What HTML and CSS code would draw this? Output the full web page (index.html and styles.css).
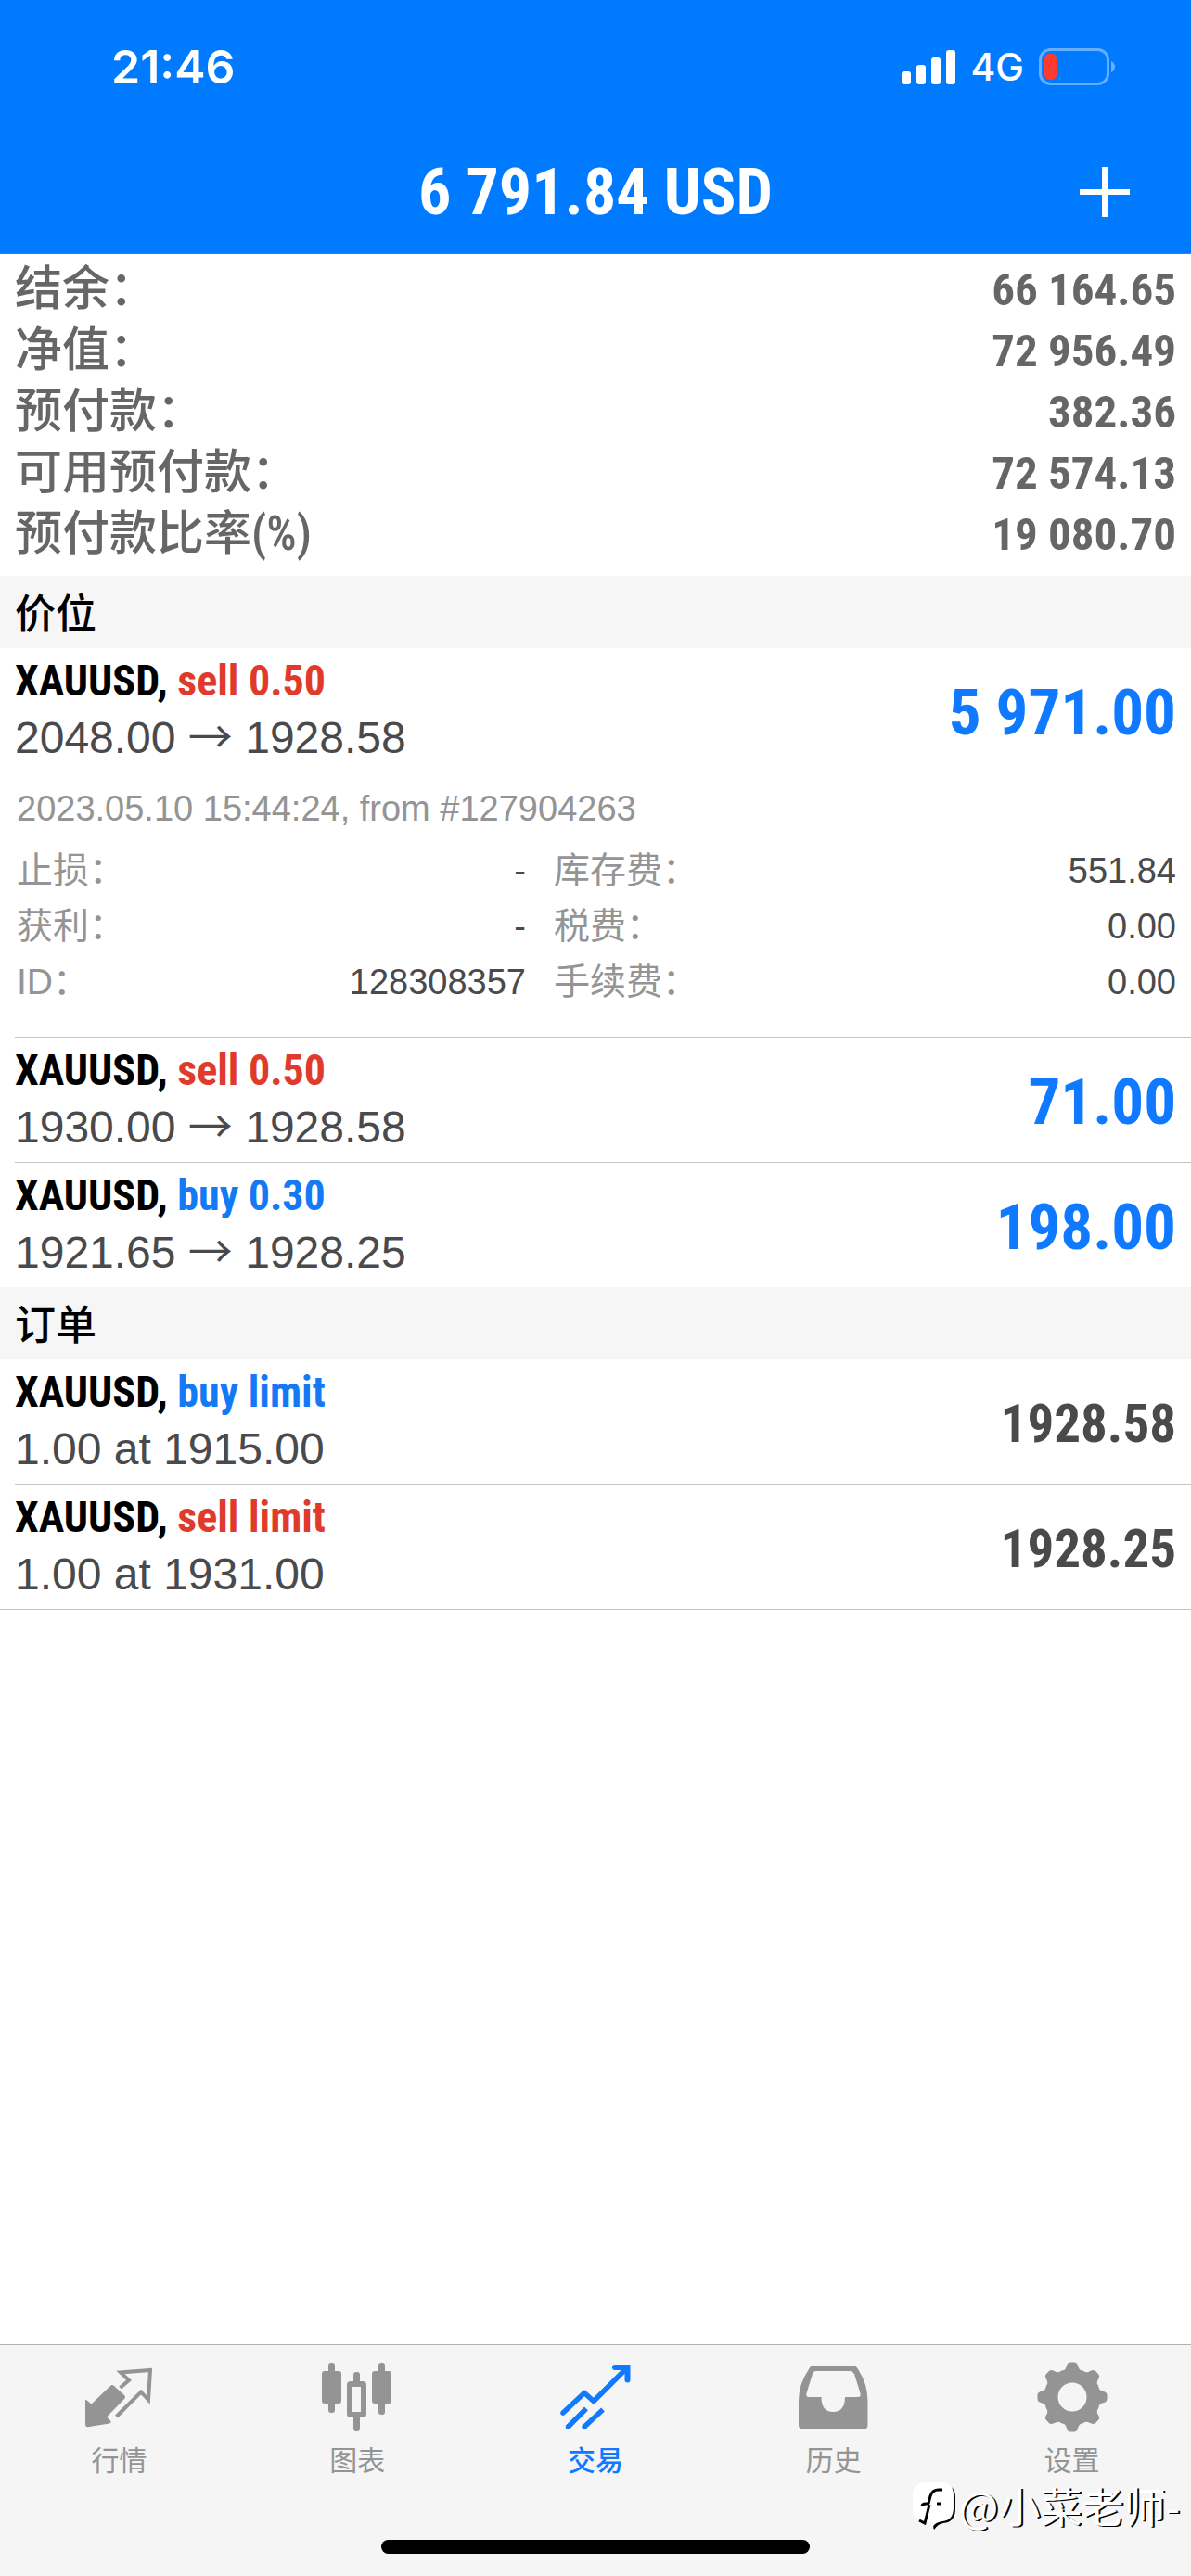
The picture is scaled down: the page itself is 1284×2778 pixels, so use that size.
FILE: index.html
```html
<!DOCTYPE html>
<html lang="zh-CN">
<head>
	<meta charset="UTF-8" />
	<meta name="viewport" content="width=device-width, initial-scale=1.0" />
	<title>交易</title>
	<link rel="stylesheet" href="styles.css">
</head>
<body>

	<header class="header">
		<div class="status">
			<span class="status__time">21:46</span>
			<div class="status__icons">
				<svg class="status__signal" viewBox="0 0 58 38" aria-hidden="true">
					<rect x="0" y="24" width="10" height="14" rx="3" />
					<rect x="16" y="17" width="10" height="21" rx="3" />
					<rect x="32" y="9" width="10" height="29" rx="3" />
					<rect x="48" y="1" width="10" height="37" rx="3" />
				</svg>
				<span class="status__network">4G</span>
				<svg class="status__battery" viewBox="0 0 83 40" aria-hidden="true">
					<rect x="1.5" y="1.5" width="73" height="37" rx="11" fill="none" stroke="#66afff" stroke-width="3" />
					<path d="M78 14 Q82 16 82 20 T78 26 Z" fill="#66afff" />
					<rect x="6" y="6" width="13" height="28" rx="5" fill="#ff3b30" />
				</svg>
			</div>
		</div>
		<div class="header__bar">
			<h1 class="header__title">6 791.84 USD</h1>
			<button class="header__add" type="button" aria-label="新订单">
				<svg viewBox="0 0 54 54" aria-hidden="true"><path d="M27 0 V54 M0 27 H54" stroke="currentColor" stroke-width="6" /></svg>
			</button>
		</div>
	</header>

	<main class="content">
		<dl class="summary">
			<div class="summary__row"><dt>结余：</dt><dd>66 164.65</dd></div>
			<div class="summary__row"><dt>净值：</dt><dd>72 956.49</dd></div>
			<div class="summary__row"><dt>预付款：</dt><dd>382.36</dd></div>
			<div class="summary__row"><dt>可用预付款：</dt><dd>72 574.13</dd></div>
			<div class="summary__row"><dt>预付款比率(%)</dt><dd>19 080.70</dd></div>
		</dl>

		<h2 class="section-title">价位</h2>
		<ul class="list">
			<li class="list__item">
				<div class="trade">
					<div class="trade__info">
						<div class="trade__symbol">XAUUSD, <span class="sell">sell 0.50</span></div>
						<div class="trade__price">2048.00 <span class="trade__arrow">→</span> 1928.58</div>
					</div>
					<div class="trade__profit">5 971.00</div>
				</div>
				<div class="details">
					<div class="details__date">2023.05.10 15:44:24, from #127904263</div>
					<dl class="details__grid">
						<div class="details__row"><dt>止损：</dt><dd>-</dd></div>
						<div class="details__row"><dt>库存费：</dt><dd>551.84</dd></div>
						<div class="details__row"><dt>获利：</dt><dd>-</dd></div>
						<div class="details__row"><dt>税费：</dt><dd>0.00</dd></div>
						<div class="details__row"><dt>ID：</dt><dd>128308357</dd></div>
						<div class="details__row"><dt>手续费：</dt><dd>0.00</dd></div>
					</dl>
				</div>
			</li>
			<li class="list__item">
				<div class="trade">
					<div class="trade__info">
						<div class="trade__symbol">XAUUSD, <span class="sell">sell 0.50</span></div>
						<div class="trade__price">1930.00 <span class="trade__arrow">→</span> 1928.58</div>
					</div>
					<div class="trade__profit">71.00</div>
				</div>
			</li>
			<li class="list__item">
				<div class="trade">
					<div class="trade__info">
						<div class="trade__symbol">XAUUSD, <span class="buy">buy 0.30</span></div>
						<div class="trade__price">1921.65 <span class="trade__arrow">→</span> 1928.25</div>
					</div>
					<div class="trade__profit">198.00</div>
				</div>
			</li>
		</ul>

		<h2 class="section-title">订单</h2>
		<ul class="list list--last">
			<li class="list__item">
				<div class="trade">
					<div class="trade__info">
						<div class="trade__symbol">XAUUSD, <span class="buy">buy limit</span></div>
						<div class="trade__price">1.00 at 1915.00</div>
					</div>
					<div class="trade__current">1928.58</div>
				</div>
			</li>
			<li class="list__item">
				<div class="trade">
					<div class="trade__info">
						<div class="trade__symbol">XAUUSD, <span class="sell">sell limit</span></div>
						<div class="trade__price">1.00 at 1931.00</div>
					</div>
					<div class="trade__current">1928.25</div>
				</div>
			</li>
		</ul>
	</main>

	<footer class="footer">
		<nav class="tabs">
			<a class="tabs__item" href="#quotes">
				<svg class="tabs__icon" viewBox="0 0 76 76" aria-hidden="true">
					<path d="M3 41 L8.500 45.500 L29 26 Q31 24 33 26 L44 36 Q46 38 44 40 L25 59.500 L29.500 64 Q30 66 28 66.500 L6 70 Q2 71 2 67 V42 Q2 40.500 3 41 Z" fill="currentColor" />
					<path d="M39.500 28 L49 20 L40 11.500 L72 9 L70 41 L62 32.500 L35.500 59" fill="none" stroke="currentColor" stroke-width="4" />
				</svg>
				<span>行情</span>
			</a>
			<a class="tabs__item" href="#charts">
				<svg class="tabs__icon" viewBox="0 0 76 76" aria-hidden="true">
					<g fill="currentColor">
						<rect x="0" y="10" width="21" height="35" rx="3" />
						<rect x="7" y="1" width="7" height="54" rx="3" />
						<rect x="54" y="10" width="21" height="35" rx="3" />
						<rect x="61" y="1" width="7" height="56" rx="3" />
						<rect x="34" y="11" width="7" height="14" rx="3" />
						<rect x="34" y="57" width="7" height="18" rx="3" />
					</g>
					<rect x="30" y="24" width="15" height="33" rx="1" fill="none" stroke="currentColor" stroke-width="6" />
				</svg>
				<span>图表</span>
			</a>
			<a class="tabs__item tabs__item--active" href="#trade">
				<svg class="tabs__icon" viewBox="0 0 76 76" aria-hidden="true">
					<g fill="none" stroke="currentColor" stroke-width="5.500">
						<path d="M3 55 L26 33.500 L36 42.500 L71 7.500" stroke-linejoin="round" stroke-linecap="round" />
						<path d="M59 6 H72.500 V19.500" stroke-width="6" stroke-linecap="round" />
						<path d="M28 50.500 L8.500 70 M46 51.500 L26 70" />
						<path d="M8.500 70 V70 M26 70 V70" stroke-linecap="round" />
					</g>
				</svg>
				<span>交易</span>
			</a>
			<a class="tabs__item" href="#history">
				<svg class="tabs__icon" viewBox="0 0 76 76" aria-hidden="true">
					<path fill="currentColor" fill-rule="evenodd" d="M16 4 H58 Q62 4 64 8 Q74.500 24 74.500 42 V68 Q74.500 73 69.500 73 H5 Q0 73 0 68 V42 Q0 24 11 8 Q13 4 16 4 Z M19 10 Q16 10 15 13 L8.500 34 Q7.500 38 11 38 H24.500 Q24.500 54 37 54 Q50 54 50 38 H64 Q67.500 38 66.500 34 L60 13 Q58 10 55 10 Z" />
				</svg>
				<span>历史</span>
			</a>
			<a class="tabs__item" href="#settings">
				<svg class="tabs__icon" viewBox="0 0 76 76" aria-hidden="true">
					<defs>
						<path id="tooth" d="M26 12 Q31 9 32 4 Q33 .5 36 .5 H40 Q43 .5 44 4 Q45 9 50 12 Z" />
					</defs>
					<circle cx="38" cy="38" r="23" fill="none" stroke="currentColor" stroke-width="15" />
					<g fill="currentColor">
						<use href="#tooth" />
						<use href="#tooth" transform="rotate(45 38 38)" />
						<use href="#tooth" transform="rotate(90 38 38)" />
						<use href="#tooth" transform="rotate(135 38 38)" />
						<use href="#tooth" transform="rotate(180 38 38)" />
						<use href="#tooth" transform="rotate(225 38 38)" />
						<use href="#tooth" transform="rotate(270 38 38)" />
						<use href="#tooth" transform="rotate(315 38 38)" />
					</g>
				</svg>
				<span>设置</span>
			</a>
		</nav>
		<div class="home-indicator"></div>
		<div class="watermark">
			<svg class="watermark__logo" viewBox="0 0 46 52" aria-hidden="true">
				<path d="M33 3 Q46 4 46 17 V29 Q46 44 33 45 Q27 46 23 52 Q21 48 24 43 L36 30 Z" fill="#000" />
				<path d="M14 1 H31 Q44 1 44 15 V28 Q44 42 32 43 Q25 44 22 48 L20 44 H14 Q0 44 0 30 V15 Q0 1 14 1 Z" fill="#fff" />
				<path d="M32 9 H28 Q21 9 19 16 L17 24 M10 27 Q10 24 14 24 H18 M18 25 L13 45 L7 42 M26 24 H31" fill="none" stroke="#000" stroke-width="3" />
			</svg>
			<span class="watermark__name">@小菜老师-</span>
		</div>
	</footer>

</body>
</html>
```
FILE: styles.css
```css
* {
	box-sizing: border-box;
}

body {
	display: flex;
	flex-direction: column;
	min-height: 100vh;
	margin: 0;
	background-color: #fff;
	color: #4a4a4c;
	font-family: "Liberation Sans", "Noto Sans CJK SC", sans-serif;
}

h1,
h2,
dl,
dd,
ul {
	margin: 0;
	padding: 0;
}

ul {
	list-style: none;
}

/* Header */

.header {
	border-bottom: 1px solid #3b7fd0;
	background-color: #007aff;
	color: #fff;
}

.status {
	display: flex;
	align-items: center;
	justify-content: space-between;
	height: 144px;
	padding: 0 81px 0 120px;
	font-family: Inter, sans-serif;
}

.status__time {
	font-size: 50px;
	font-weight: 600;
}

.status__icons {
	display: flex;
	align-items: center;
}

.status__signal {
	width: 58px;
	height: 38px;
	fill: #fff;
}

.status__network {
	margin: 0 16px;
	font-size: 41px;
	font-weight: 500;
}

.status__battery {
	width: 83px;
	height: 40px;
}

.header__bar {
	display: grid;
	grid-template-columns: 1fr auto 1fr;
	align-items: center;
	height: 129px;
	padding: 0 66px 4px;
}

.header__title {
	grid-column: 2;
	font-family: "Roboto Condensed", Roboto, sans-serif;
	font-size: 70px;
	font-weight: bold;
}

.header__add {
	justify-self: end;
	width: 54px;
	height: 54px;
	padding: 0;
	border: 0;
	background: none;
	color: inherit;
}

.header__add svg {
	display: block;
}

/* Account summary */

.content {
	flex: 1;
}

.summary {
	padding: 5px 16px 12px;
	color: #666;
	font-family: "Roboto Condensed", Roboto, "Noto Sans CJK SC", sans-serif;
}

.summary__row {
	display: flex;
	align-items: baseline;
	justify-content: space-between;
	height: 66px;
	font-size: 51px;
	font-weight: 500;
	line-height: 66px;
}

.summary dd {
	font-size: 49px;
	font-weight: bold;
}

.section-title {
	padding: 0 16px 2px;
	background-color: #f6f6f6;
	color: #000;
	font-family: "Noto Sans CJK SC", sans-serif;
	font-size: 44px;
	font-weight: 500;
	line-height: 76px;
}

/* Positions and orders */

.list--last {
	border-bottom: 1px solid #c4c4c6;
}

.list__item {
	margin-left: 16px;
	padding-right: 16px;
}

.list__item + .list__item {
	border-top: 1px solid #c4c4c6;
}

.trade {
	display: flex;
	align-items: center;
	justify-content: space-between;
	padding: 4px 0 6px;
}

.trade__info {
	font-size: 48px;
	line-height: 62px;
}

.trade__symbol {
	color: #000;
	font-family: "Roboto Condensed", Roboto, sans-serif;
	font-size: 46px;
	font-weight: bold;
}

.trade__arrow {
	font-family: "Noto Sans CJK SC", sans-serif;
	line-height: 1;
}

.trade__profit,
.trade__current {
	padding-top: 6px;
	font-family: "Roboto Condensed", Roboto, sans-serif;
	font-weight: bold;
}

.trade__profit {
	color: #0f7aff;
	font-size: 69px;
}

.trade__current {
	font-size: 57px;
}

.sell {
	color: #e03a2d;
}

.buy {
	color: #1479f5;
}

.details {
	padding: 9px 0 29px 2px;
	font-size: 38px;
	line-height: 60px;
}

.details__date,
.details dt {
	color: #949494;
}

.details dt {
	font-size: 39px;
}

.details__grid {
	display: grid;
	grid-template-columns: 9fr 11fr;
	column-gap: 30px;
	margin-top: 7px;
}

.details__row {
	display: flex;
	justify-content: space-between;
}

/* Tab bar */

.footer {
	position: relative;
	padding: 18px 0 24px;
	border-top: 1px solid #b2b2b2;
	background-color: #f5f5f5;
}

.tabs {
	display: grid;
	grid-template-columns: repeat(5, 1fr);
}

.tabs__item {
	display: flex;
	flex-direction: column;
	align-items: center;
	gap: 8px;
	color: #949494;
	font-family: "Noto Sans CJK SC", sans-serif;
	font-size: 30px;
	line-height: 40px;
	text-decoration: none;
}

.tabs__item--active {
	color: #0f7aff;
	font-weight: 500;
}

.tabs__icon {
	width: 76px;
	height: 76px;
}

.home-indicator {
	width: 36%;
	height: 15px;
	margin: 68px auto 0;
	border-radius: 8px;
	background-color: #000;
}

.watermark {
	position: absolute;
	right: 12px;
	bottom: 46px;
	display: flex;
	align-items: center;
	gap: 4px;
}

.watermark__logo {
	width: 46px;
	height: 52px;
}

.watermark__name {
	color: #fff;
	font-family: "Noto Sans CJK SC", sans-serif;
	font-size: 45px;
	line-height: 60px;
	text-shadow: 2px 1px 0 #000;
}
```
